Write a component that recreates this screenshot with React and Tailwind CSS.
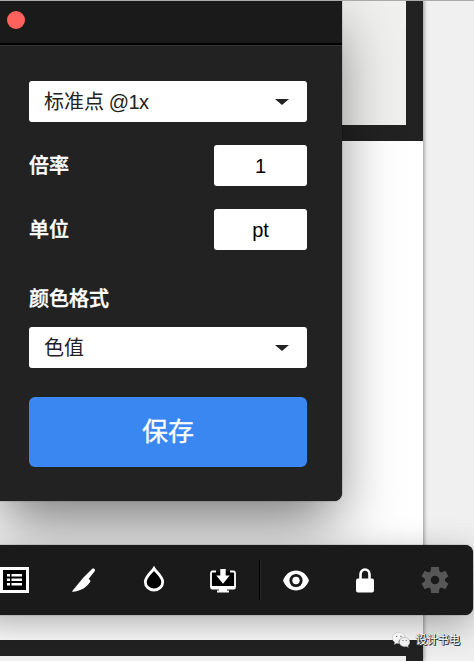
// --- Toolbar icons ---
const ListIcon = () => (
  <svg width="29" height="26" viewBox="0 0 29 26">
    <rect width="29" height="26" fill="#fff" />
    <rect x="3" y="3" width="23" height="20" fill="#000" />
    <path
      d="M7 7h3v2.500h-3zM11.500 7h10.500v2.500h-10.500zM7 11.500h3v2.500h-3zM11.500 11.500h10.500v2.500h-10.500zM7 16h3v2.500h-3zM11.500 16h10.500v2.500h-10.500z"
      fill="#fff"
    />
  </svg>
);

const KnifeIcon = () => (
  <svg width="24" height="24" viewBox="0 0 24 24" fill="#fff">
    <path d="M20.200.7C21.500-.2 23.500.9 22.900 2.700c-.2.6-.6 1-1 1.500l-5.300 6.800c1.500.8 2.200 1.700 1.600 2.800C14.800 19.200 8.500 23.500.6 23.700c-.5 0-.6-.4-.3-.8L11 9.900z" />
  </svg>
);

const DropIcon = () => (
  <svg width="22" height="26" viewBox="0 0 22 26">
    <path
      d="M11 2.500C9 6 2.300 10.500 2.300 16a8.700 8 0 0 0 17.400 0C19.700 10.500 13 6 11 2.500z"
      fill="#000"
      stroke="#fff"
      strokeWidth="2.800"
    />
  </svg>
);

const DownloadIcon = () => (
  <svg width="26" height="24" viewBox="0 0 26 24">
    <rect x="1" y="2.500" width="24" height="17.500" rx="2" fill="#000" />
    <path d="M6 2.500H2.500Q1 2.500 1 4.500V18M20 2.500h3.500Q25 2.500 25 4.500V18" fill="none" stroke="#fff" strokeWidth="1.800" />
    <path d="M.2 17h25.600v1.500q0 2-2 2H17v1h2V23.500H7v-2h2v-1H2.200q-2 0-2-2z" fill="#fff" />
    <path d="M10.300 0h5.400v6.500h4L13 14.800 6.300 6.500h4z" fill="#fff" />
  </svg>
);

const EyeIcon = () => (
  <svg width="26" height="21" viewBox="0 0 26 21">
    <path d="M0 10.500C2.500 4 7.300.5 13 .5S23.500 4 26 10.500C23.500 17 18.700 20.500 13 20.500S2.500 17 0 10.500z" fill="#fff" />
    <circle cx="13" cy="10.500" r="6.600" fill="#1a1a1a" />
    <circle cx="13" cy="10.500" r="3.700" fill="#fff" />
  </svg>
);

const LockIcon = () => (
  <svg width="18" height="25" viewBox="0 0 18 25">
    <path d="M4.500 12V6.500a4.500 5 0 0 1 9 0V12" fill="none" stroke="#fff" strokeWidth="2.600" />
    <rect y="10.500" width="18" height="14" rx="2" fill="#fff" />
  </svg>
);

const GearIcon = () => (
  <svg width="28" height="28" viewBox="0 0 28 28" fill="#575757">
    <path
      fillRule="evenodd"
      d="M10.200 1h7.600l.6 4.200 2 1.200 4-1.700 3 5.500L24 13v2l3.400 2.800-3 5.500-4-1.700-2 1.200-.6 4.200h-7.600l-.6-4.200-2-1.200-4 1.700-3-5.500L4 15v-2L.6 10.200l3-5.500 4 1.700 2-1.200zM14 9.700a4.300 4.300 0 1 0 0 8.600 4.300 4.300 0 0 0 0-8.600z"
    />
  </svg>
);

const WechatIcon = () => (
  <svg width="18" height="17" viewBox="0 0 18 17">
    <path d="M7 .5C3.200.5.300 3 .300 6c0 1.800 1 3.200 2.500 4.200L2.200 12.500l2.500-1.300c.8.2 1.500.3 2.300.3C6 7.500 9 4.700 13.300 4.800 12.600 2.300 10 .5 7 .5z" fill="#f5f5f5" stroke="#aaa" strokeWidth=".4" />
    <path d="M12.500 5.500c-3 0-5.300 2-5.300 4.600s2.400 4.600 5.300 4.600c.7 0 1.300-.1 1.900-.3l2 1.200-.5-1.900c1.200-.8 2-2.100 2-3.600 0-2.600-2.500-4.600-5.400-4.600z" fill="#f0f0f0" stroke="#888" strokeWidth=".4" />
    <path d="M4 3.700h1.300V5H4zM8.300 3.700h1.300V5H8.300zM10.300 8h1.100v1.100h-1.100zM13.700 8h1.100v1.100h-1.100z" fill="#777" />
  </svg>
);

// --- Form controls ---
const Select = ({ value }) => (
  <button className="flex h-[41px] w-full items-center justify-between rounded-[3px] bg-white pl-[15px] pr-[18px] text-[20px] text-[#222]">
    <span>{value}</span>
    <svg width="14" height="6" viewBox="0 0 14 6" fill="#222">
      <path d="M0 0h14L7 6z" />
    </svg>
  </button>
);

const Field = ({ label, value }) => (
  <div className="flex items-center justify-between">
    <span className="text-[20px] font-medium text-white [-webkit-text-stroke:0.4px_#fff]">{label}</span>
    <div className="flex h-[41px] w-[93px] items-center justify-center rounded-[3px] bg-white text-[20px] text-black">
      {value}
    </div>
  </div>
);

const SettingsDialog = () => (
  <section className="absolute -left-1.5 -top-2 h-[509px] w-[348px] rounded-lg bg-[#222] shadow-[0_30px_60px_-6px_rgba(0,0,0,0.5),0_0_1px_#000]">
    <header className="flex h-[53px] items-center rounded-t-lg border-b-2 border-black bg-[#1a1a1a] pl-[13px] pt-1">
      <span className="size-[18px] rounded-full bg-[#ff625c]" />
    </header>
    <div className="border-t border-[#333] px-[35px] pt-[35px]">
      <Select value={<>标准点<span className="tracking-[-0.7px]"> @1x</span></>} />
      <div className="mt-[23px] flex flex-col gap-[23px]">
        <Field label="倍率" value="1" />
        <Field label="单位" value="pt" />
      </div>
      <p className="mb-[13px] mt-[34px] text-[20px] font-medium leading-[30px] text-white [-webkit-text-stroke:0.4px_#fff]">颜色格式</p>
      <Select value="色值" />
      <button className="mt-[29px] h-[70px] w-full rounded-md bg-[#3b87f2] text-[26px] text-white [-webkit-text-stroke:0.3px_#fff]">保存</button>
    </div>
  </section>
);

const Toolbar = () => (
  <nav className="absolute -left-6 top-[545px] flex h-[70px] w-[497px] items-center rounded-lg bg-[#1a1a1a] shadow-[0_10px_36px_rgba(0,0,0,0.32),0_0_1px_#000]">
    <div className="flex w-[283px] items-center">
      <span className="ml-6"><ListIcon /></span>
      <span className="ml-[43px]"><KnifeIcon /></span>
      <span className="mb-[3px] ml-[47px]"><DropIcon /></span>
      <span className="ml-[45px] mt-0.5"><DownloadIcon /></span>
    </div>
    <div className="h-10 w-0.5 border-l border-black bg-[#252525]" />
    <div className="flex items-center">
      <span className="ml-[22px]"><EyeIcon /></span>
      <span className="ml-[47px]"><LockIcon /></span>
      <span className="ml-[47px]"><GearIcon /></span>
    </div>
  </nav>
);

const App = () => (
  <main className="relative h-[661px] w-[474px] overflow-hidden border-t border-[#aaa] bg-[#f0f0f0] font-['Liberation_Sans','Noto_Sans_CJK_SC',sans-serif]">
    {/* Artboards behind the windows */}
    <div className="-mt-px flex h-[661px] w-[423px] flex-col justify-between bg-white shadow-[1px_0_4px_rgba(0,0,0,0.4)]">
      <div className="h-[141px] border-b-16 border-r-[17px] border-[#222] bg-[#f0f0ee]" />
      <div className="h-[21px] border-r-[17px] border-t-16 border-[#222] bg-[#f0f0f0]" />
    </div>

    {/* Floating windows */}
    <div className="absolute -top-px left-0">
      <SettingsDialog />
      <Toolbar />
    </div>

    <div className="absolute left-[392px] top-[630px] flex items-center gap-1.5">
      <WechatIcon />
      <span className="text-[11px] leading-[18px] text-white [text-shadow:1px_1px_0_#333,0_1px_0_#444,1px_0_0_#444,-1px_0_0_#aaa]">
        设计书电
      </span>
    </div>
  </main>
);

export default App;
